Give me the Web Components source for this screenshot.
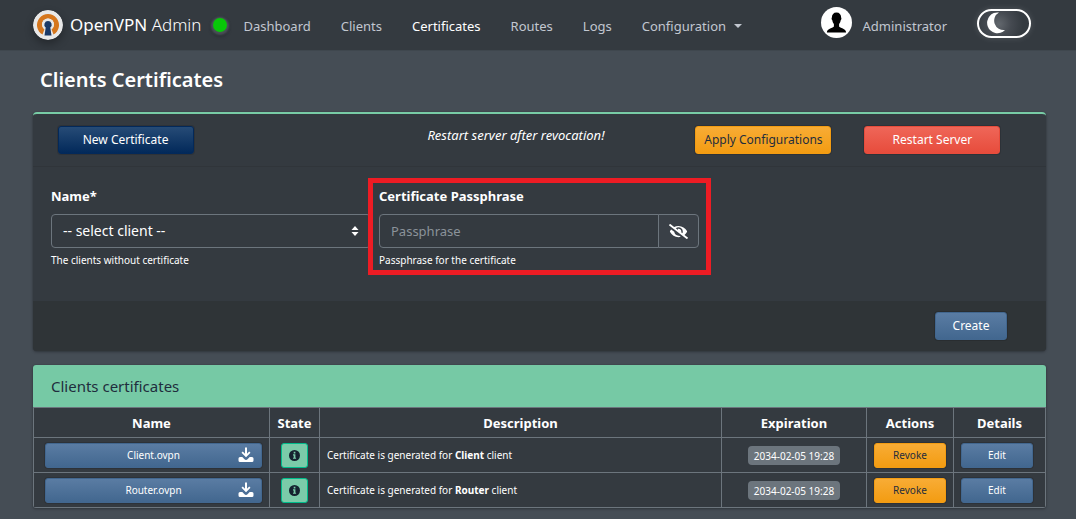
<!DOCTYPE html>
<html lang="en">
<head>
<meta charset="utf-8">
<title>OpenVPN Admin - Clients Certificates</title>
<style>
  html { background: #454d55; }
  body { margin: 0; color: #fff; font: 13px/20px "Noto Sans", "Open Sans", sans-serif; }
</style>
</head>
<body>
<ovpn-app></ovpn-app>
<script>
const BASE = `
  *, *::before, *::after { box-sizing: border-box; }
  button, input, select { font: inherit; color: inherit; margin: 0; }
  button { cursor: pointer; }
  a { color: inherit; text-decoration: none; }
  svg { display: block; }
`;

function define(name, css, html) {
  const template = document.createElement('template');
  template.innerHTML = `<style>${BASE}${css}</style>${html}`;
  customElements.define(name, class extends HTMLElement {
    constructor() {
      super();
      this.attachShadow({ mode: 'open' }).append(template.content.cloneNode(true));
    }
  });
}

define('ovpn-button', `
  :host { display: block; }
  button {
    display: block; width: 100%; height: var(--button-height, 28px); padding: 0 8px;
    border: 1px solid #42678f; border-radius: 3px; white-space: nowrap;
    font-size: 12px; line-height: 18px; color: #fff;
    background: linear-gradient(#5a7ca3, #42678f);
    box-shadow: 0 0 0 1px rgba(0, 0, 0, .12);
  }
  :host([size="small"]) button { --button-height: 25px; font-size: 10px; line-height: 16px; }
  :host([kind="navy"]) button { background: linear-gradient(#264b76, #02295a); border-color: #03295a; }
  :host([kind="warning"]) button { background: linear-gradient(#f8ac35, #f39c12); border-color: #f39c12; color: #1f2d3d; }
  :host([kind="danger"]) button { background: linear-gradient(#ef6658, #e74c3c); border-color: #e74c3c; }
`, `<button type="button"><slot></slot></button>`);

define('ovpn-download', `
  :host { display: block; }
  button {
    display: grid; grid-template-columns: 16px 1fr 16px; align-items: center;
    width: 100%; height: 25px; padding: 0 7px;
    border: 1px solid #42678f; border-radius: 3px; font-size: 10px; line-height: 16px; color: #fff;
    background: linear-gradient(#5a7ca3, #42678f);
    box-shadow: 0 0 0 1px rgba(0, 0, 0, .12);
  }
  span { grid-column: 2; }
`, `<button type="button"><span><slot></slot></span>
  <svg width="16" height="16" viewBox="0 0 16 16" aria-hidden="true">
    <path fill="#fff" d="M7 .5h2v6.200l2.200-2.200 1.300 1.300L8 10.300 3.500 5.800l1.300-1.300L7 6.700zM2 10h2.300L6.500 12.200a2.100 2.100 0 0 0 3 0L11.700 10H14a1.500 1.500 0 0 1 1.500 1.500v2A1.500 1.500 0 0 1 14 15H2a1.500 1.500 0 0 1-1.500-1.500v-2A1.500 1.500 0 0 1 2 10z"/>
  </svg></button>`);

define('ovpn-info', `
  :host { display: flex; justify-content: center; }
  button {
    display: grid; place-items: center; width: 27px; height: 25px; padding: 0;
    border: 1px solid #00bc8c; border-radius: 3px; background: #7bcba9;
  }
`, `<button type="button" aria-label="Certificate state">
  <svg width="11" height="11" viewBox="0 0 11 11" aria-hidden="true">
    <circle cx="5.5" cy="5.5" r="5.5" fill="#15222f"/>
    <path fill="#7bcba9" d="M4.700 1.800h1.700v1.600H4.700zM4 4.300h2.400v3.400h.7v1.100H4V7.700h.7V5.400H4z"/>
  </svg></button>`);

define('ovpn-badge', `
  :host {
    display: inline-block; padding: 2px 6px 1px; border-radius: 4px; background: #6c757d;
    font-size: 10px; line-height: 16px; white-space: nowrap; vertical-align: middle;
  }
`, `<slot></slot>`);

define('ovpn-navbar', `
  :host {
    display: flex; align-items: center; height: 51px; padding: 0 45px 0 33px;
    background: #343a40; border-bottom: 1px solid #3f474e; color: #c2c7d0; white-space: nowrap;
  }
  .brand { display: flex; align-items: center; gap: 7px; font-size: 17px; line-height: 26px; color: #fff; font-weight: 300; }
  .brand svg { border-radius: 50%; box-shadow: 0 4px 8px rgba(0, 0, 0, .3); }
  .brand b { font-weight: 400; }
  .online { width: 14px; height: 14px; margin: 0 16px 0 12px; border-radius: 50%; background: #08c808; box-shadow: 0 1px 2px 2px rgba(110, 115, 125, .5), 0 3px 4px 1px rgba(0, 0, 0, .3); }
  nav { display: flex; align-items: center; gap: 30px; padding-top: 2px; }
  nav a.active { color: #fff; }
  .menu { display: flex; align-items: center; gap: 8px; }
  .menu::after { content: ""; border: 4px solid transparent; border-top-color: currentColor; border-bottom: 0; }
  .user { display: flex; align-items: center; gap: 11px; margin-left: auto; }
  .user svg { margin-bottom: 5px; }
  .user span { padding-top: 2px; }
  .theme { position: relative; display: block; width: 54px; height: 29px; margin: 0 0 3px 30px; }
  .theme input {
    display: block; width: 100%; height: 100%; appearance: none; border: 2px solid #fff; border-radius: 15px;
    background: radial-gradient(circle at 20px 13px, #62676d 0, #454a51 12px, #343a40 24px);
    box-shadow: 0 0 6px rgba(255, 255, 255, .15);
  }
  .theme svg { position: absolute; left: 9px; top: 3px; }
`, `
  <a class="brand" href="#">
    <svg width="30" height="30" viewBox="0 0 30 30" aria-hidden="true">
      <circle cx="15" cy="15" r="15" fill="#e8e8e8"/>
      <path fill="#d5761d" d="M9.500 24.600A11 11 0 1 1 20.500 24.600L18.500 19.300A6 6 0 1 0 11.500 19.300z"/>
      <circle cx="15" cy="14.500" r="6" fill="#e8e8e8"/>
      <path fill="#1a3967" d="M15 11a3.700 3.700 0 0 1 2.300 6.600L18.500 25.500h-7l1.200-7.900A3.700 3.700 0 0 1 15 11z"/>
    </svg>
    <span><b>OpenVPN</b> Admin</span>
  </a>
  <span class="online" role="img" aria-label="Server online"></span>
  <nav>
    <a href="#">Dashboard</a>
    <a href="#">Clients</a>
    <a href="#" class="active">Certificates</a>
    <a href="#">Routes</a>
    <a href="#">Logs</a>
    <a href="#" class="menu">Configuration</a>
  </nav>
  <a class="user" href="#">
    <svg width="31" height="31" viewBox="0 0 31 31" aria-hidden="true">
      <circle cx="15.5" cy="15.5" r="15.5" fill="#fff"/>
      <path d="M15.500 5.500c3 0 4.700 2 4.600 5 .6.400.3 2.300-.4 2.800-.3 1.800-.9 2.900-1.600 3.700v2.600c.7 1.600 6.900 2 7 5.900H5.900c.1-3.900 6.300-4.300 7-5.900V17c-.7-.8-1.300-1.900-1.600-3.700-.7-.5-1-2.400-.4-2.800-.1-3 1.600-5 4.600-5z"/>
    </svg>
    <span>Administrator</span>
  </a>
  <label class="theme">
    <input type="checkbox" aria-label="Dark mode">
    <svg width="20" height="22" viewBox="0 0 20 22" aria-hidden="true"><path fill="#fff" d="M13 .5a10.400 10.400 0 1 0 6 17.500A9.400 9.400 0 0 1 13 .5z"/></svg>
  </label>`);

define('ovpn-field', `
  :host { display: block; position: relative; min-width: 0; }
  :host([highlight])::after {
    content: ""; position: absolute; inset: -8px -12px -7px -11px; border: 5px solid #ed1c24; pointer-events: none;
  }
  small { display: block; font-size: 10px; line-height: 16px; margin-top: 4px; }
`, `<slot></slot><small><slot name="hint"></slot></small>`);

define('ovpn-certificate-form', `
  :host {
    display: block; background: #343a40; border-top: 2px solid #78cca6; border-radius: 4px;
    box-shadow: 0 0 1px rgba(0, 0, 0, .3), 0 1px 3px rgba(0, 0, 0, .3);
  }
  header {
    display: grid; grid-template-columns: 169fr 143fr 325fr 169fr 169fr; align-items: center;
    height: 53px; padding: 0 29px 0 8px; border-bottom: 1px solid #30353a;
  }
  header ovpn-button { width: 136px; justify-self: center; }
  header em { grid-column: 3; justify-self: center; font-size: 13px; line-height: 18px; margin-bottom: 10px; white-space: nowrap; }
  .fields { display: grid; grid-template-columns: repeat(3, 1fr); gap: 8px; padding: 19px 19px 33px 18px; }
  .label { display: block; font-weight: 700; line-height: 20px; margin-bottom: 8px; }
  .box { position: relative; display: flex; }
  select, input {
    appearance: none; flex: 1; min-width: 0; height: 34px; padding: 0 11px;
    border: 1px solid #6c757d; border-radius: 4px; background: #343a40; outline: 0;
  }
  select { font-size: 14px; }
  input { border-radius: 4px 0 0 4px; }
  input::placeholder { color: #8b939a; opacity: 1; }
  .arrows { position: absolute; right: 12px; top: 12px; pointer-events: none; }
  .reveal {
    display: grid; place-items: center; width: 41px; padding: 0; background: #3a4047;
    border: 1px solid #6c757d; border-radius: 0 4px 4px 0; margin-left: -1px;
  }
  footer { display: flex; justify-content: flex-end; padding: 11px 39px; background: #2f3437; border-radius: 0 0 4px 4px; }
  footer ovpn-button { width: 72px; }
`, `
  <header>
    <ovpn-button kind="navy">New Certificate</ovpn-button>
    <em>Restart server after revocation!</em>
    <ovpn-button kind="warning">Apply Configurations</ovpn-button>
    <ovpn-button kind="danger">Restart Server</ovpn-button>
  </header>
  <div class="fields">
    <ovpn-field>
      <label class="label" for="client">Name*</label>
      <div class="box">
        <select id="client"><option>-- select client --</option></select>
        <svg class="arrows" width="8" height="10" viewBox="0 0 8 10" aria-hidden="true"><path fill="#fff" d="M4 0l3.500 4h-7zM4 10l3.500-4h-7z"/></svg>
      </div>
      <span slot="hint">The clients without certificate</span>
    </ovpn-field>
    <ovpn-field highlight>
      <label class="label" for="passphrase">Certificate Passphrase</label>
      <div class="box">
        <input id="passphrase" type="password" placeholder="Passphrase">
        <button class="reveal" type="button" aria-label="Show passphrase">
          <svg width="19" height="15" viewBox="0 0 640 512" preserveAspectRatio="none" aria-hidden="true"><path fill="#fff" d="M320 400c-75.850 0-137.250-58.710-142.900-133.110L72.200 185.820c-13.790 17.300-26.480 35.590-36.720 55.590a32.350 32.350 0 0 0 0 29.190C89.710 376.410 197.070 448 320 448c26.910 0 52.870-4 77.890-10.460L346 397.390a144.130 144.130 0 0 1-26 2.610zm313.820 58.100l-110.550-85.440a331.250 331.250 0 0 0 81.250-102.070 32.350 32.350 0 0 0 0-29.190C550.290 135.590 442.930 64 320 64a308.150 308.150 0 0 0-147.320 37.700L45.460 3.370A16 16 0 0 0 23 6.180L3.370 31.450A16 16 0 0 0 6.180 53.900l588.360 454.730a16 16 0 0 0 22.460-2.810l19.640-25.270a16 16 0 0 0-2.820-22.450zM450.720 314.720l-39.300-30.380A94.750 94.750 0 0 0 416 256a94.760 94.760 0 0 0-121.310-92.210A47.650 47.650 0 0 1 304 192a46.640 46.640 0 0 1-1.540 10l-73.610-56.890A142.310 142.310 0 0 1 320 112a143.920 143.920 0 0 1 144 144c0 21.630-5.290 41.790-13.280 58.720z"/></svg>
        </button>
      </div>
      <span slot="hint">Passphrase for the certificate</span>
    </ovpn-field>
  </div>
  <footer><ovpn-button>Create</ovpn-button></footer>`);

define('ovpn-certificate-table', `
  :host {
    display: block; background: #343a40; border-radius: 3px; overflow: hidden;
    box-shadow: 0 0 1px rgba(0, 0, 0, .3), 0 1px 3px rgba(0, 0, 0, .3);
  }
  h2 { margin: 0; padding: 9px 18px; background: #76c9a5; color: #1f2d3d; font-size: 15px; line-height: 24px; font-weight: 400; }
  table { width: 100%; table-layout: fixed; border-collapse: collapse; }
  th, td { border: 1px solid #6c757d; padding: 0 7px; }
  th { height: 30px; font-size: 13px; line-height: 18px; font-weight: 700; }
  td { height: 35px; font-size: 10px; line-height: 16px; }
  .name { width: 236px; }
  .state { width: 50px; }
  .expiration { width: 145px; }
  .actions { width: 87px; }
  .details { width: 92px; }
  td:first-child { padding-left: 11px; }
  td:nth-child(4) { text-align: center; }
  td:last-child { padding-right: 12px; }
`, `
  <h2>Clients certificates</h2>
  <table>
    <thead><tr>
      <th class="name">Name</th><th class="state">State</th><th>Description</th>
      <th class="expiration">Expiration</th><th class="actions">Actions</th><th class="details">Details</th>
    </tr></thead>
    <tbody>
      <tr>
        <td><ovpn-download>Client.ovpn</ovpn-download></td>
        <td><ovpn-info></ovpn-info></td>
        <td>Certificate is generated for <b>Client</b> client</td>
        <td><ovpn-badge>2034-02-05 19:28</ovpn-badge></td>
        <td><ovpn-button kind="warning" size="small">Revoke</ovpn-button></td>
        <td><ovpn-button size="small">Edit</ovpn-button></td>
      </tr>
      <tr>
        <td><ovpn-download>Router.ovpn</ovpn-download></td>
        <td><ovpn-info></ovpn-info></td>
        <td>Certificate is generated for <b>Router</b> client</td>
        <td><ovpn-badge>2034-02-05 19:28</ovpn-badge></td>
        <td><ovpn-button kind="warning" size="small">Revoke</ovpn-button></td>
        <td><ovpn-button size="small">Edit</ovpn-button></td>
      </tr>
    </tbody>
  </table>`);

define('ovpn-app', `
  :host { display: block; }
  main { padding: 0 30px 11px 33px; }
  h1 { margin: 0; padding: 15px 7px 18px; font-size: 20px; line-height: 28px; font-weight: 600; }
  ovpn-certificate-table { margin-top: 14px; }
`, `
  <ovpn-navbar></ovpn-navbar>
  <main>
    <h1>Clients Certificates</h1>
    <ovpn-certificate-form></ovpn-certificate-form>
    <ovpn-certificate-table></ovpn-certificate-table>
  </main>`);
</script>
</body>
</html>
